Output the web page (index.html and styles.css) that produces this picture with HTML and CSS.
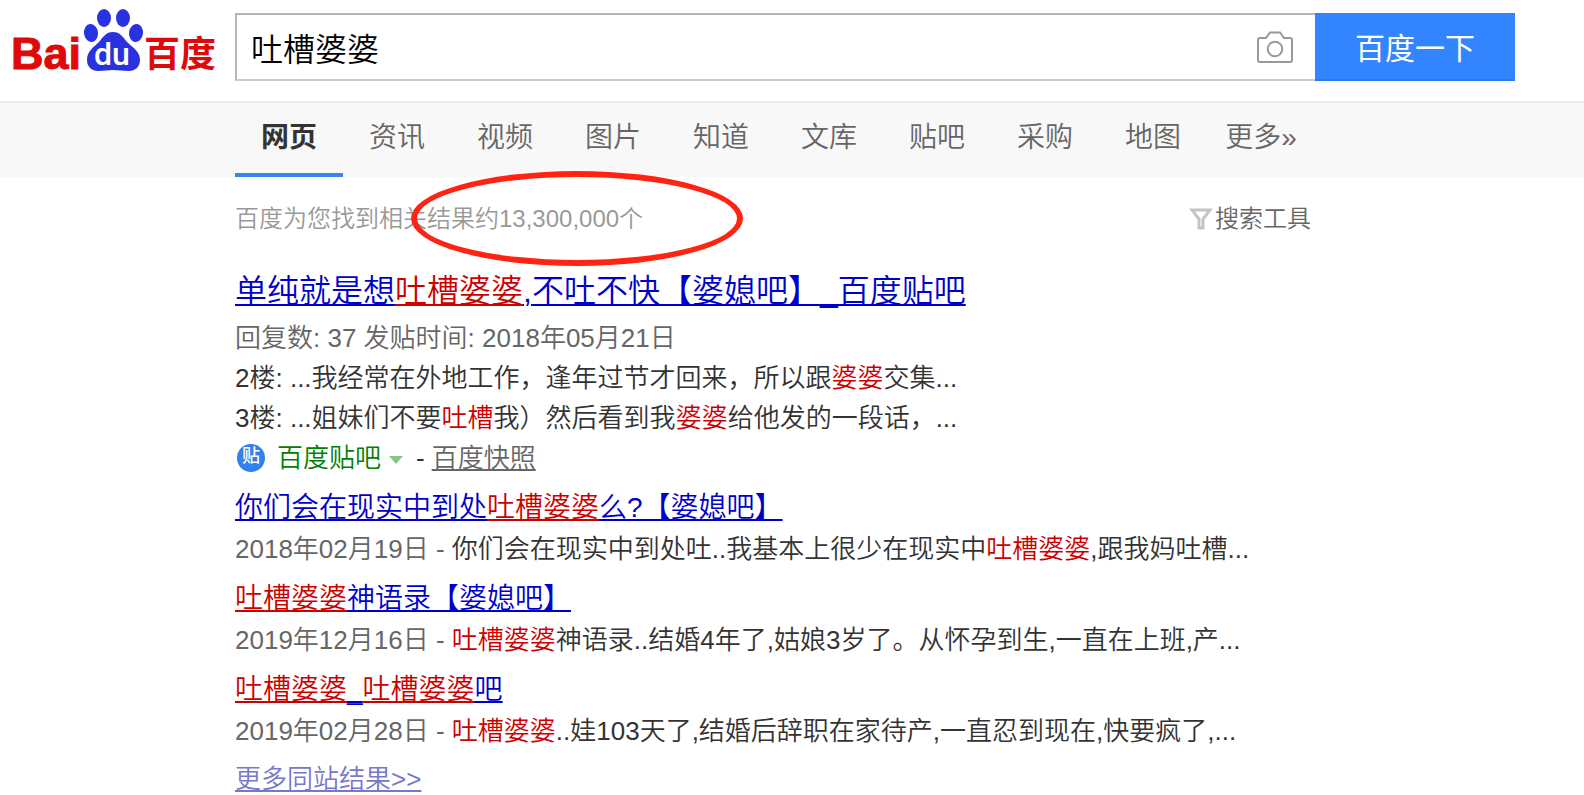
FILE: index.html
```html
<!DOCTYPE html>
<html lang="zh-CN">
<head>
<meta charset="utf-8">
<meta name="viewport" content="width=device-width, initial-scale=1">
<title>吐槽婆婆_百度搜索</title>
<link rel="stylesheet" href="styles.css">
</head>
<body>
<header class="header">
  <a class="logo" href="#" aria-label="百度">
    <svg class="logo-art" viewBox="0 0 205 66" aria-hidden="true">
      <g class="logo-red">
        <text class="logo-latin" x="-2" y="61">Bai</text>
        <text class="logo-cjk" x="131" y="59">百度</text>
      </g>
      <g class="logo-blue">
        <ellipse cx="78" cy="25" rx="7" ry="9" transform="rotate(-8 78 25)"/>
        <ellipse cx="91" cy="10" rx="7" ry="9"/>
        <ellipse cx="110" cy="10" rx="7" ry="9"/>
        <ellipse cx="123" cy="25" rx="7" ry="9" transform="rotate(8 123 25)"/>
        <path d="M100 24C93 24 90 29 86 34C81 39 74 43 74 52C74 59 79 63 85 63C91 63 95 62 100 62C105 62 110 63 116 63C122 63 127 59 127 52C127 43 119 39 114 34C110 29 107 24 100 24Z"/>
      </g>
      <text class="logo-du" x="81" y="57">du</text>
    </svg>
  </a>
  <form class="search" action="#">
    <div class="search-box">
      <input class="search-input" type="text" aria-label="搜索" value="吐槽婆婆">
      <button class="camera" type="button" aria-label="按图片搜索">
        <svg viewBox="0 0 36 32" width="36" height="32" aria-hidden="true"><path d="M3 7H9L13 1.500H23L27 7H33Q35 7 35 9V29Q35 31 33 31H3Q1 31 1 29V9Q1 7 3 7Z"/><circle cx="18" cy="18" r="7.300"/></svg>
      </button>
    </div>
    <button class="search-button" type="submit">百度一下</button>
  </form>
</header>
<nav class="tabs">
  <a class="tab tab-current" href="#">网页</a>
  <a class="tab" href="#">资讯</a>
  <a class="tab" href="#">视频</a>
  <a class="tab" href="#">图片</a>
  <a class="tab" href="#">知道</a>
  <a class="tab" href="#">文库</a>
  <a class="tab" href="#">贴吧</a>
  <a class="tab" href="#">采购</a>
  <a class="tab" href="#">地图</a>
  <a class="tab" href="#">更多»</a>
</nav>
<main class="content">
  <div class="summary">
    <p class="count">百度为您找到相关结果约13,300,000个<span class="ring"></span></p>
    <button class="tools" type="button">
      <svg viewBox="0 0 24 22" width="24" height="22" aria-hidden="true"><path d="M3 2H21L14 11V20H10V11Z"/></svg>
      搜索工具
    </button>
  </div>
  <article class="result">
    <h2 class="title"><a href="#">单纯就是想<em>吐槽婆婆</em>,不吐不快【婆媳吧】_百度贴吧</a></h2>
    <p class="line muted">回复数: 37 发贴时间: 2018年05月21日</p>
    <p class="line">2楼: ...我经常在外地工作，逢年过节才回来，所以跟<em>婆婆</em>交集...</p>
    <p class="line">3楼: ...姐妹们不要<em>吐槽</em>我）然后看到我<em>婆婆</em>给他发的一段话，...</p>
    <div class="line source">
      <span class="badge" aria-hidden="true">贴</span>
      <a class="site" href="#">百度贴吧</a>
      <span class="caret"></span>
      <span>-</span>
      <a class="cache" href="#">百度快照</a>
    </div>
    <ul class="sub-list">
      <li>
        <h3 class="subtitle"><a href="#">你们会在现实中到处<em>吐槽婆婆</em>么?【婆媳吧】</a></h3>
        <p class="line"><span class="muted">2018年02月19日 - </span>你们会在现实中到处吐..我基本上很少在现实中<em>吐槽婆婆</em>,跟我妈吐槽...</p>
      </li>
      <li>
        <h3 class="subtitle"><a href="#"><em>吐槽婆婆</em>神语录【婆媳吧】</a></h3>
        <p class="line"><span class="muted">2019年12月16日 - </span><em>吐槽婆婆</em>神语录..结婚4年了,姑娘3岁了。从怀孕到生,一直在上班,产...</p>
      </li>
      <li>
        <h3 class="subtitle"><a href="#"><em>吐槽婆婆</em>_<em>吐槽婆婆</em>吧</a></h3>
        <p class="line"><span class="muted">2019年02月28日 - </span><em>吐槽婆婆</em>..娃103天了,结婚后辞职在家待产,一直忍到现在,快要疯了,...</p>
      </li>
    </ul>
    <a class="more" href="#">更多同站结果&gt;&gt;</a>
  </article>
</main>
</body>
</html>
```

FILE: styles.css
```css
* {
  box-sizing: border-box;
}

body {
  margin: 0;
  background: #fff;
  color: #333;
  font: 350 26px/40px "Liberation Sans", "Noto Sans CJK SC", sans-serif;
}

h2, h3, p, ul {
  margin: 0;
  padding: 0;
  font-weight: inherit;
}

ul {
  list-style: none;
}

button, input {
  margin: 0;
  padding: 0;
  border: 0;
  background: none;
  color: inherit;
  font: inherit;
}

em {
  color: #c00;
  font-style: normal;
  text-decoration: inherit;
}

.header {
  display: flex;
  padding: 13px 69px 20px 13px;
}

.logo {
  flex: none;
  width: 222px;
}

.logo-art {
  display: block;
  width: 205px;
  height: 66px;
  margin-top: -5px;
  overflow: visible;
}

.logo-red {
  fill: #de0a0a;
}

.logo-blue {
  fill: #2932e1;
}

.logo-latin {
  stroke: #de0a0a;
  stroke-width: 1;
  font: 700 45px "Liberation Sans", sans-serif;
}

.logo-cjk {
  font: 700 36px "Noto Sans CJK SC", sans-serif;
}

.logo-du {
  fill: #fff;
  font: 500 32px Roboto, sans-serif;
}

.search {
  display: flex;
  flex: 1;
  height: 68px;
}

.search-box {
  display: flex;
  flex: 1;
  align-items: center;
  padding: 0 22px 0 14px;
  border: 2px solid #b6b6b6;
  border-right: 0;
  border-bottom-color: #ccc;
}

.search-input {
  flex: 1;
  min-width: 0;
  height: 60px;
  outline: 0;
  color: #000;
  font-size: 32px;
}

.camera {
  display: flex;
}

.camera svg {
  fill: none;
  stroke: #999;
  stroke-width: 2;
}

.search-button {
  width: 200px;
  padding-top: 6px;
  border-bottom: 2px solid #2d78f4;
  background: #3385ff;
  color: #fff;
  font-size: 30px;
  font-weight: 400;
}

.tabs {
  display: flex;
  padding-left: 235px;
  border-top: 2px solid #ebebeb;
  background: #f8f8f8;
}

.tab {
  width: 108px;
  border-bottom: 4px solid transparent;
  color: #666;
  font-size: 28px;
  line-height: 70px;
  text-align: center;
  text-decoration: none;
}

.tab-current {
  border-color: #3b86ea;
  color: #333;
  font-weight: 700;
}

.content {
  width: 1076px;
  max-width: 100%;
  margin-left: 235px;
}

.summary {
  display: flex;
  justify-content: space-between;
  padding: 22px 0;
}

.count {
  position: relative;
  color: #999;
  font-size: 24px;
}

.ring {
  position: absolute;
  top: -28px;
  left: 176px;
  width: 332px;
  height: 95px;
  border: 6px solid #ff2312;
  border-radius: 50%;
}

.tools {
  display: flex;
  align-items: center;
  gap: 2px;
  color: #666;
  font-size: 24px;
}

.tools svg {
  fill: none;
  stroke: #c4c4c4;
  stroke-width: 3;
}

.title, .subtitle {
  white-space: nowrap;
}

.title {
  margin: 10px 0 7px;
  font-size: 32px;
}

.subtitle {
  margin-bottom: 1px;
  font-size: 28px;
}

.title a, .subtitle a {
  color: #0000cc;
}

.title a, .subtitle a, .cache, .more {
  text-decoration-line: underline;
  text-decoration-thickness: 2px;
  text-underline-offset: 2px;
}

.line {
  white-space: nowrap;
}

.muted {
  color: #666;
}

.source {
  display: flex;
  align-items: center;
}

.badge {
  width: 28px;
  height: 28px;
  margin: 0 12px 0 2px;
  border-radius: 50%;
  background: #3280ec;
  color: #fff;
  font-size: 18px;
  font-weight: 500;
  line-height: 24px;
  text-align: center;
}

.site {
  color: #008000;
  text-decoration: none;
}

.caret {
  margin: 4px 13px 0 8px;
  border: 7px solid transparent;
  border-top: 8px solid #85c585;
  border-bottom: 0;
}

.cache {
  margin-left: 7px;
  color: #666;
}

.sub-list {
  display: grid;
  gap: 10px;
  padding: 10px 0 12px;
}

.more {
  display: block;
  color: #7777cc;
  line-height: 32px;
}
```
